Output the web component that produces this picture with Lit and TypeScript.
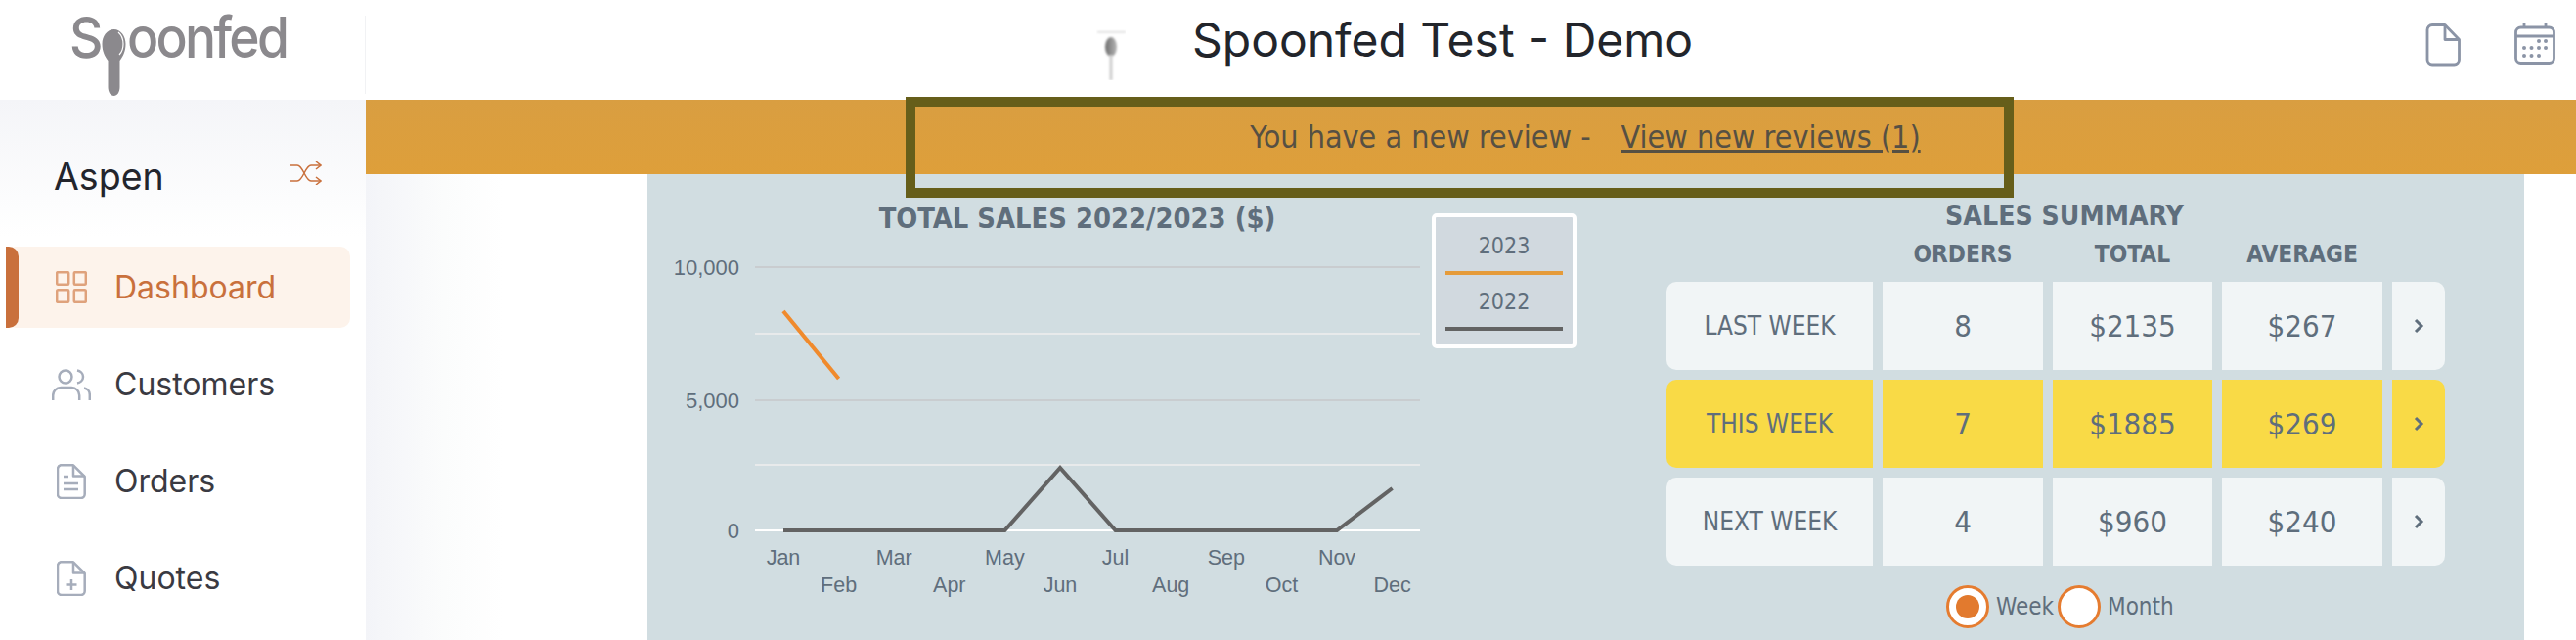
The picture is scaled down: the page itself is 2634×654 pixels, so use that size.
import { LitElement, html, css, svg } from "lit";
import { customElement } from "lit/decorators.js";

const months = ["Jan","Feb","Mar","Apr","May","Jun","Jul","Aug","Sep","Oct","Nov","Dec"];
const rows = [
  { label: "LAST WEEK", o: "8", t: "$2135", a: "$267", hi: false },
  { label: "THIS WEEK", o: "7", t: "$1885", a: "$269", hi: true },
  { label: "NEXT WEEK", o: "4", t: "$960", a: "$240", hi: false },
];

@customElement("app-root")
export class AppRoot extends LitElement {
  static styles = css`
    :host { display: block; width: 2634px; height: 654px; overflow: hidden; position: relative; font-family: Inter, "Liberation Sans", sans-serif; background: #fff; }
    .header { height: 102px; display: flex; }
    .logo-cell { width: 374px; box-sizing: border-box; padding: 0 0 0 71px; display: flex; align-items: flex-start; }
    .logo { display: flex; align-items: flex-start; color: #8b898d; font: 500 58px/1 Inter, sans-serif; letter-spacing: -3px; padding-top: 9px; }
    .logo svg { margin: 21px 0 0 0; flex: none; position: relative; }
    .logo span { display: block; transform: scaleX(0.92); transform-origin: left top; }
    .logo .s { width: 33px; }
    .logo .rest { margin-left: 1px; }
    .head-main { flex: 1; display: flex; align-items: flex-start; border-left: 1px solid #f1f2f4; margin-top: 16px; height: 80px; margin-left: -1px; position: relative; }
    .head-inner { flex: 1; display: flex; align-items: flex-start; padding-left: 747px; margin-top: -16px; }
    .title { font-size: 48px; line-height: 56px; color: #22252b; margin: 13px 0 0 68px; font-weight: 400; }
    .mini { margin-top: 28px; flex: none; }
    .head-icons { margin-left: auto; display: flex; gap: 55px; padding: 24px 21px 0 0; align-items: flex-start; }
    .body { display: flex; height: 552px; }
    .side { width: 374px; flex: none; background: linear-gradient(180deg, #f4f5f8 0, #fff 140px); box-sizing: border-box; }
    .store { display: flex; align-items: center; justify-content: space-between; padding: 53px 45px 0 55px; height: 94px; box-sizing: border-box; }
    .store span { font-size: 37.5px; line-height: 44px; color: #23252c; position: relative; top: 5px; }
    .store svg { position: relative; top: 1px; }
    .nav { margin-top: 56px; display: flex; flex-direction: column; gap: 16px; }
    .item { height: 83px; margin: 0 16px 0 6px; display: flex; align-items: center; position: relative; font-size: 32px; color: #3a3a42; padding-left: 111px; border-radius: 10px; }
    .item .ic { position: absolute; left: 47px; top: 0; bottom: 0; width: 40px; display: flex; align-items: center; justify-content: center; }
    .item.active { background: #fdf3eb; color: #c9703c; }
    .item.active::before { content: ""; position: absolute; left: 0; top: 0; bottom: 0; width: 13px; background: #c9703c; border-radius: 0 10px 10px 0; }
    .main { flex: 1; display: flex; flex-direction: column; min-width: 0; background: linear-gradient(90deg, #f3f4f8 0, #fbfcfc 80px, #fff 140px); }
    .banner { height: 76px; flex: none; background: linear-gradient(180deg, #d99e41, #de9f3a); display: flex; align-items: center; justify-content: center; color: #565043; font: 400 32px/1 "DejaVu Sans", sans-serif; font-stretch: condensed; padding-left: 234px; box-sizing: border-box; }
    .banner a { color: inherit; text-decoration: underline; margin-left: 31px; }
    .content { flex: 1; padding: 0 53px 0 288px; display: flex; min-height: 0; }
    .panel { flex: 1; background: #d1dde1; display: flex; color: #5f6e7c; font-family: "DejaVu Sans", sans-serif; font-stretch: condensed; }
    .chart { width: 802px; height: 476px; flex: none; display: block; }
    .legend { width: 148px; height: 138px; margin-top: 40px; box-sizing: border-box; flex: none; border: 4px solid #fff; border-radius: 5px; background: #d1d9df; padding: 0 10px; font-size: 23px; text-align: center; display: flex; flex-direction: column; }
    .legend div { height: 57px; display: flex; flex-direction: column; box-sizing: border-box; padding-top: 14px; line-height: 30px; }
    .legend i { display: block; height: 4px; margin-top: 11px; flex: none; }
    .summary { margin-left: 92px; width: 796px; flex: none; display: flex; flex-direction: column; }
    .sum-title { font-weight: 700; font-size: 28.2px; line-height: 34px; margin-top: 26px; text-align: center; padding-left: 18px; }
    .grid { display: grid; grid-template-columns: 211px 164px 163px 164px 54px; column-gap: 10px; }
    .heads { font-weight: 700; font-size: 24.3px; line-height: 30px; text-align: center; margin-top: 7px; height: 43px; }
    .rows { row-gap: 10px; grid-auto-rows: 90px; }
    .cell { background: #f1f5f6; display: flex; align-items: center; justify-content: center; font-size: 31px; }
    .cell.lab { font-size: 26px; border-radius: 10px 0 0 10px; }
    .cell.go { border-radius: 0 10px 10px 0; }
    .cell.hi { background: #f9da46; }
    .radios { display: flex; justify-content: flex-start; align-items: center; padding-left: 286px; margin-top: 20px; font-size: 24px; height: 44px; }
    .radio { width: 44px; height: 44px; box-sizing: border-box; border: 3px solid #e57c30; border-radius: 50%; background: #fff; display: flex; align-items: center; justify-content: center; flex: none; }
    .radio b { width: 24px; height: 24px; border-radius: 50%; background: #e27a2e; display: block; }
    .radios span { margin: 0 4px 0 7px; }
    .mark { position: absolute; left: 926px; top: 99px; width: 1133px; height: 103px; box-sizing: border-box; border: 10px solid #665e1a; pointer-events: none; }
  `;

  private chart() {
    const x = (i: number) => 139 + i * 56.6;
    const oy = 178;
    const gy = [[273,"#c9cccf"],[341,"#e8eaeb"],[409,"#c9cdd0"],[475,"#e8eaeb"],[542,"#ffffff"]] as [number,string][];
    const grey = [542,542,542,542,542,478,542,542,542,542,542,499];
    const pts = grey.map((v,i)=>`${x(i)},${v-oy}`).join(" ");
    return html`<svg class="chart" viewBox="0 0 802 476">
      <text x="439.5" y="55" text-anchor="middle" font-weight="700" font-size="28.8" fill="#5f6e7c">TOTAL SALES 2022/2023 ($)</text>
      ${gy.map(([y,c])=>svg`<line x1="110" x2="790" y1=${y-oy} y2=${y-oy} stroke=${c} stroke-width="2"/>`)}
      ${[["10,000",273],["5,000",409],["0",542]].map(([t,y])=>svg`<text x="94" y=${(y as number)-oy+8} text-anchor="end" font-family="Liberation Sans" font-size="22" style="font-stretch:normal" fill="#5f6e7c">${t}</text>`)}
      ${months.map((m,i)=>svg`<text x=${x(i)} y=${i%2?427:399} text-anchor="middle" font-family="Liberation Sans" font-size="21.5" style="font-stretch:normal" fill="#5f6e7c">${m}</text>`)}
      <polyline points="${x(0)},140 ${x(1)},209" fill="none" stroke="#f08a2c" stroke-width="4"/>
      <polyline points=${pts} fill="none" stroke="#636363" stroke-width="4"/>
    </svg>`;
  }

  render() {
    return html`
      <div class="header">
        <div class="logo-cell">
          <div class="logo"><span class="s">S</span>
            <svg width="25" height="68" viewBox="0 0 24 68">
              <path d="M12 0C5 0 0 7 0 15c0 8 3 13 6 17l0 27c0 5 2.500 9 6 9s6-4 6-9l0-27c3-4 6-9 6-17C24 7 19 0 12 0z" fill="#8b898d"/>
              <path d="M16.500 3c3.500 3 5 7.500 5 12 0 4-1 8-4 11" fill="none" stroke="#fff" stroke-width="1.200"/>
            </svg>
            <span class="rest">oonfed</span>
          </div>
        </div>
        <div class="head-main">
          <div class="head-inner">
            <svg class="mini" width="30" height="54" viewBox="0 0 30 54">
              <defs><filter id="bl"><feGaussianBlur stdDeviation="0.8"/></filter>
              <linearGradient id="sp" x1="0" x2="1"><stop offset="0" stop-color="#6f6f6f"/><stop offset="1" stop-color="#b5b5b5"/></linearGradient></defs>
              <g filter="url(#bl)">
                <rect x="1" y="4" width="29" height="1.500" fill="#dadada"/>
                <ellipse cx="15" cy="20" rx="6" ry="10" fill="url(#sp)"/>
                <rect x="13.500" y="28" width="3" height="26" fill="#cfcfcf"/>
              </g>
            </svg>
            <div class="title">Spoonfed Test - Demo</div>
            <div class="head-icons">
              <svg width="36" height="44" viewBox="0 0 36 44" fill="none" stroke="#8b94a6" stroke-width="2.800" stroke-linejoin="round">
                <path d="M7 1.500h13l14.500 15V37a5 5 0 0 1-5 5H7a5 5 0 0 1-5-5V6.500a5 5 0 0 1 5-5z"/><path d="M20 1.500V16.500h14.500"/>
              </svg>
              <svg width="42" height="42" viewBox="0 0 42 42" fill="none" stroke="#8b94a6" stroke-width="2.800">
                <rect x="1.500" y="4" width="39" height="36.500" rx="5"/><path d="M1.500 13h39"/><path d="M10 0v5M32 0v5"/>
                <g fill="#8b94a6" stroke="none">
                  ${[[25,18],[32,18],[10,25],[17.500,25],[25,25],[32,25],[10,33],[17.500,33],[25,33]].map(([a,b])=>svg`<circle cx=${a} cy=${b} r="2"/>`)}
                </g>
              </svg>
            </div>
          </div>
        </div>
      </div>
      <div class="body">
        <div class="side">
          <div class="store"><span>Aspen</span>
            <svg width="32" height="24" viewBox="0 0 32 24" fill="none" stroke="#c9703c" stroke-width="1.500">
              <path d="M0 4h7c6 0 8 16 14 16h9M0 20h7c6 0 8-16 14-16h9"/><path d="M26 0l5 4-5 4M26 16l5 4-5 4"/>
            </svg>
          </div>
          <div class="nav">
            <div class="item active"><span class="ic">
              <svg width="32" height="33" viewBox="0 0 32 33" fill="none" stroke="#dfa27c" stroke-width="2.500"><rect x="1.200" y="1.200" width="12" height="12.500" rx="1"/><rect x="18.800" y="1.200" width="12" height="12.500" rx="1"/><rect x="1.200" y="19.300" width="12" height="12.500" rx="1"/><rect x="18.800" y="19.300" width="12" height="12.500" rx="1"/></svg>
            </span>Dashboard</div>
            <div class="item"><span class="ic">
              <svg width="40" height="32" viewBox="0 0 40 32" fill="none" stroke="#a6adbb" stroke-width="2.500"><circle cx="14" cy="8" r="6.500"/><path d="M26 1.500c3 .5 6 3 6 6.500s-3 6-6 6.500"/><path d="M1.200 32v-5a8 8 0 0 1 8-8h11a8 8 0 0 1 8 8v5"/><path d="M33 19.500c3 .5 5.800 3 5.800 7V32"/></svg>
            </span>Customers</div>
            <div class="item"><span class="ic">
              <svg width="30" height="36" viewBox="0 0 30 36" fill="none" stroke="#a6adbb" stroke-width="2.500" stroke-linejoin="round"><path d="M4 1.300h13l11.700 11.700V31a4 4 0 0 1-4 4H5a4 4 0 0 1-4-4V5a4 4 0 0 1 3-3.700z"/><path d="M17 1.300V12.500h11.700"/><path d="M7 13h5M7 20h15M7 26h15"/></svg>
            </span>Orders</div>
            <div class="item"><span class="ic">
              <svg width="30" height="36" viewBox="0 0 30 36" fill="none" stroke="#a6adbb" stroke-width="2.500" stroke-linejoin="round"><path d="M4 1.300h13l11.700 11.700V31a4 4 0 0 1-4 4H5a4 4 0 0 1-4-4V5a4 4 0 0 1 3-3.700z"/><path d="M17 1.300V12.500h11.700"/><path d="M15 19v11M9.500 24.500h11"/></svg>
            </span>Quotes</div>
          </div>
        </div>
        <div class="main">
          <div class="banner"><span>You have a new review -</span><a>View new reviews (1)</a></div>
          <div class="content">
            <div class="panel">
              ${this.chart()}
              <div class="legend">
                <div>2023<i style="background:#e59b3a"></i></div>
                <div>2022<i style="background:#636363"></i></div>
              </div>
              <div class="summary">
                <div class="sum-title">SALES SUMMARY</div>
                <div class="grid heads"><span></span><span>ORDERS</span><span>TOTAL</span><span>AVERAGE</span><span></span></div>
                <div class="grid rows">
                  ${rows.map(r=>html`
                    <div class="cell lab ${r.hi?"hi":""}">${r.label}</div>
                    <div class="cell ${r.hi?"hi":""}">${r.o}</div>
                    <div class="cell ${r.hi?"hi":""}">${r.t}</div>
                    <div class="cell ${r.hi?"hi":""}">${r.a}</div>
                    <div class="cell go ${r.hi?"hi":""}"><svg width="12" height="16" viewBox="0 0 12 16" fill="none" stroke="#5f6e7c" stroke-width="3"><path d="M3 2l6 6-6 6"/></svg></div>
                  `)}
                </div>
                <div class="radios">
                  <div class="radio"><b></b></div><span>Week</span>
                  <div class="radio"></div><span>Month</span>
                </div>
              </div>
            </div>
          </div>
        </div>
      </div>
      <div class="mark"></div>
    `;
  }
}
